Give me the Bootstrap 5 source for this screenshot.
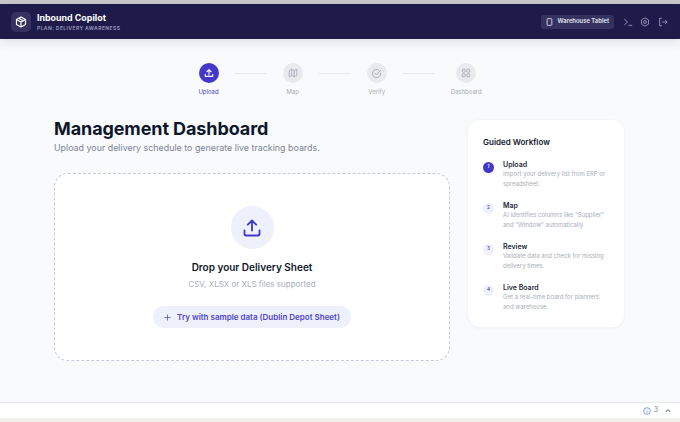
<!DOCTYPE html>
<html lang="en">
<head>
    <meta charset="UTF-8">
    <meta name="viewport" content="width=device-width, initial-scale=1.0">
    <title>Inbound Copilot</title>
    <link href="https://cdn.jsdelivr.net/npm/bootstrap@5.3.0/dist/css/bootstrap.min.css" rel="stylesheet">
    <style>
        html, body { height: 422px; overflow: hidden; }
        body { font-family: "Inter", "Liberation Sans", sans-serif; background: #f8fafc; color: #0f172a; }
        .top-strip { height: 4px; background: #c9c9cc; }
        .app-head { height: 35px; background: #1e1b4b; padding: 0 12px 0 11px; box-shadow: 0 3px 10px rgba(30, 27, 75, .12); }
        .brand-wrap { gap: 6px; }
        .logo-box { width: 20px; height: 20px; border-radius: 5px; background: #35325f; color: #fff; }
        .brand-name { font-size: 8.9px; font-weight: 700; line-height: 11px; color: #fff; }
        .brand-plan { font-size: 5px; font-weight: 700; letter-spacing: .4px; line-height: 7px; color: #8f8db3; margin-top: 2px; }
        .device-pill { height: 14px; padding: 0 5px; border-radius: 3px; background: #35325f; color: #e6e6f2; font-size: 5.9px; font-weight: 600; gap: 5px; }
        .head-icon { color: #a5a4c4; }
        .step-bar { margin-top: 24px; }
        .step-dot { width: 20px; height: 20px; border-radius: 50%; background: #e8eaee; color: #a3a8b2; }
        .step-dot.now { background: #4338ca; color: #fff; }
        .step-name { font-size: 6px; line-height: 8px; margin-top: 5px; color: #a8adb7; white-space: nowrap; }
        .step-name.now { color: #4f46c8; }
        .step-line { width: 32px; height: 1px; background: #e6e8ec; margin: 10px 16px 0; }
        .work-area { margin: 22px 55px 0 54px; gap: 17px; align-items: flex-start; }
        .main-col { width: 396px; }
        .page-title { font-size: 18px; font-weight: 700; line-height: 22px; margin: 0; letter-spacing: -.1px; }
        .page-sub { font-size: 8.9px; line-height: 12px; margin: 2px 0 0; color: #7c8494; }
        .drop-zone { height: 188px; margin-top: 19px; padding-top: 32px; border: 1px dashed #c9c8dc; border-radius: 14px; background: #fff; }
        .drop-circle { width: 43px; height: 43px; border-radius: 50%; background: #eef0fc; color: #4338ca; }
        .drop-title { font-size: 10px; font-weight: 600; line-height: 13px; margin-top: 12px; color: #0f172a; }
        .drop-hint { font-size: 8px; line-height: 10px; margin-top: 5px; color: #a9aeb8; }
        .sample-btn { height: 22px; margin-top: 17px; padding: 0 11px; border: 0; border-radius: 11px; background: #eef0fc; color: #4f46c8; font-size: 8px; font-weight: 600; gap: 6px; }
        .guide-card { width: 158px; height: 209px; margin-top: 1px; padding: 17px 15px; background: #fff; border: 1px solid #f4f5f9; border-radius: 13px; box-shadow: 0 1px 3px rgba(15, 23, 42, .03); }
        .guide-title { font-size: 8px; font-weight: 600; line-height: 10px; margin: 0 0 13px; }
        .guide-item { gap: 9px; height: 41px; }
        .guide-num { width: 11px; height: 11px; flex: none; margin-top: 2px; border-radius: 50%; background: #eef0fc; color: #4f46c8; font-size: 4.5px; font-weight: 600; }
        .guide-num.now { background: #4338ca; color: #fff; }
        .guide-head { font-size: 7px; font-weight: 600; line-height: 9px; color: #1e293b; }
        .guide-text { font-size: 6px; line-height: 10px; color: #a9aeb8; white-space: nowrap; }
        .foot-bar { position: absolute; left: 0; right: 0; top: 402px; height: 16px; padding-right: 8px; background: #fff; border-top: 1px solid #e9ebef; color: #7d8592; font-size: 7px; }
        .foot-count { margin: 0 6px 0 3px; }
        .foot-edge { position: absolute; left: 0; right: 0; top: 418px; height: 4px; background: #f3efe9; }
        svg { display: block; }
    </style>
</head>
<body>
    <div class="top-strip"></div>
    <header class="app-head d-flex align-items-center justify-content-between">
        <div class="brand-wrap d-flex align-items-center">
            <div class="logo-box d-flex align-items-center justify-content-center">
                <svg width="12" height="12" viewBox="0 0 24 24" fill="none" stroke="currentColor" stroke-width="2.4" stroke-linejoin="round"><path d="M12 2l9 5v10l-9 5-9-5V7z"/><path d="M3 7l9 5 9-5M12 12v10M7.5 4.5l9 5"/></svg>
            </div>
            <div>
                <div class="brand-name">Inbound Copilot</div>
                <div class="brand-plan">PLAN: DELIVERY AWARENESS</div>
            </div>
        </div>
        <div class="d-flex align-items-center">
            <div class="device-pill d-flex align-items-center">
                <svg width="7" height="8" viewBox="0 0 20 24" fill="none" stroke="currentColor" stroke-width="2.6"><rect x="3" y="2" width="14" height="20" rx="2"/></svg>
                Warehouse Tablet
            </div>
            <svg class="head-icon" style="margin-left:9px" width="10" height="10" viewBox="0 0 24 24" fill="none" stroke="currentColor" stroke-width="2"><path d="M3 5l8 7-8 7M13 20h9"/></svg>
            <svg class="head-icon" style="margin-left:7px" width="10" height="10" viewBox="0 0 24 24" fill="none" stroke="currentColor" stroke-width="2"><path d="M12 2l8.5 5v10L12 22l-8.5-5V7z"/><circle cx="12" cy="12" r="3.5"/></svg>
            <svg class="head-icon" style="margin-left:8px" width="10" height="10" viewBox="0 0 24 24" fill="none" stroke="currentColor" stroke-width="2"><path d="M9 3H4v18h5M10 12h11M17 7l5 5-5 5"/></svg>
        </div>
    </header>

    <nav class="step-bar d-flex justify-content-center">
        <div class="d-flex flex-column align-items-center">
            <div class="step-dot now d-flex align-items-center justify-content-center">
                <svg width="10" height="10" viewBox="0 0 24 24" fill="none" stroke="currentColor" stroke-width="2.6" stroke-linecap="round" stroke-linejoin="round"><path d="M12 16V4M7 9l5-5 5 5M3 15v5h18v-5"/></svg>
            </div>
            <div class="step-name now">Upload</div>
        </div>
        <div class="step-line"></div>
        <div class="d-flex flex-column align-items-center">
            <div class="step-dot d-flex align-items-center justify-content-center">
                <svg width="10" height="10" viewBox="0 0 24 24" fill="none" stroke="currentColor" stroke-width="2" stroke-linejoin="round"><path d="M3 6l6-3 6 3 6-3v15l-6 3-6-3-6 3zM9 3v15M15 6v15"/></svg>
            </div>
            <div class="step-name">Map</div>
        </div>
        <div class="step-line"></div>
        <div class="d-flex flex-column align-items-center">
            <div class="step-dot d-flex align-items-center justify-content-center">
                <svg width="11" height="11" viewBox="0 0 24 24" fill="none" stroke="currentColor" stroke-width="2" stroke-linecap="round" stroke-linejoin="round"><path d="M21 11v1a9 9 0 1 1-5-8"/><path d="M8 11l4 4 9-10"/></svg>
            </div>
            <div class="step-name">Verify</div>
        </div>
        <div class="step-line"></div>
        <div class="d-flex flex-column align-items-center">
            <div class="step-dot d-flex align-items-center justify-content-center">
                <svg width="10" height="10" viewBox="0 0 24 24" fill="none" stroke="currentColor" stroke-width="2"><rect x="3" y="3" width="7" height="7" rx="1.5"/><rect x="14" y="3" width="7" height="7" rx="1.5"/><rect x="14" y="14" width="7" height="7" rx="1.5"/><rect x="3" y="14" width="7" height="7" rx="1.5"/></svg>
            </div>
            <div class="step-name">Dashboard</div>
        </div>
    </nav>

    <main class="work-area d-flex">
        <section class="main-col">
            <h1 class="page-title">Management Dashboard</h1>
            <p class="page-sub">Upload your delivery schedule to generate live tracking boards.</p>
            <div class="drop-zone d-flex flex-column align-items-center">
                <div class="drop-circle d-flex align-items-center justify-content-center">
                    <svg width="20" height="20" viewBox="0 0 24 24" fill="none" stroke="currentColor" stroke-width="2.2" stroke-linecap="round" stroke-linejoin="round"><path d="M12 15V3M7 8l5-5 5 5M3 15v4a2 2 0 0 0 2 2h14a2 2 0 0 0 2-2v-4"/></svg>
                </div>
                <div class="drop-title">Drop your Delivery Sheet</div>
                <div class="drop-hint">CSV, XLSX or XLS files supported</div>
                <button class="sample-btn btn d-flex align-items-center" type="button">
                    <svg width="7" height="7" viewBox="0 0 24 24" fill="none" stroke="currentColor" stroke-width="2.6" stroke-linecap="round"><path d="M12 3v18M3 12h18"/></svg>
                    Try with sample data (Dublin Depot Sheet)
                </button>
            </div>
        </section>
        <aside class="guide-card">
            <h2 class="guide-title">Guided Workflow</h2>
            <div class="guide-item d-flex">
                <div class="guide-num now d-flex align-items-center justify-content-center">1</div>
                <div>
                    <div class="guide-head">Upload</div>
                    <div class="guide-text">Import your delivery list from ERP or<br>spreadsheet.</div>
                </div>
            </div>
            <div class="guide-item d-flex">
                <div class="guide-num d-flex align-items-center justify-content-center">2</div>
                <div>
                    <div class="guide-head">Map</div>
                    <div class="guide-text">AI identifies columns like "Supplier"<br>and "Window" automatically.</div>
                </div>
            </div>
            <div class="guide-item d-flex">
                <div class="guide-num d-flex align-items-center justify-content-center">3</div>
                <div>
                    <div class="guide-head">Review</div>
                    <div class="guide-text">Validate data and check for missing<br>delivery times.</div>
                </div>
            </div>
            <div class="guide-item d-flex">
                <div class="guide-num d-flex align-items-center justify-content-center">4</div>
                <div>
                    <div class="guide-head">Live Board</div>
                    <div class="guide-text">Get a real-time board for planners<br>and warehouse.</div>
                </div>
            </div>
        </aside>
    </main>

    <footer class="foot-bar d-flex align-items-center justify-content-end">
        <svg width="8" height="8" viewBox="0 0 24 24" fill="none" stroke="#5b8fd0" stroke-width="2.4"><circle cx="12" cy="12" r="10"/><path d="M12 11v6M12 7v1"/></svg>
        <span class="foot-count">3</span>
        <svg width="8" height="8" viewBox="0 0 24 24" fill="none" stroke="#4b5563" stroke-width="3"><path d="M5 15l7-7 7 7"/></svg>
    </footer>
    <div class="foot-edge"></div>
    <script src="https://cdn.jsdelivr.net/npm/bootstrap@5.3.0/dist/js/bootstrap.bundle.min.js"></script>
</body>
</html>
